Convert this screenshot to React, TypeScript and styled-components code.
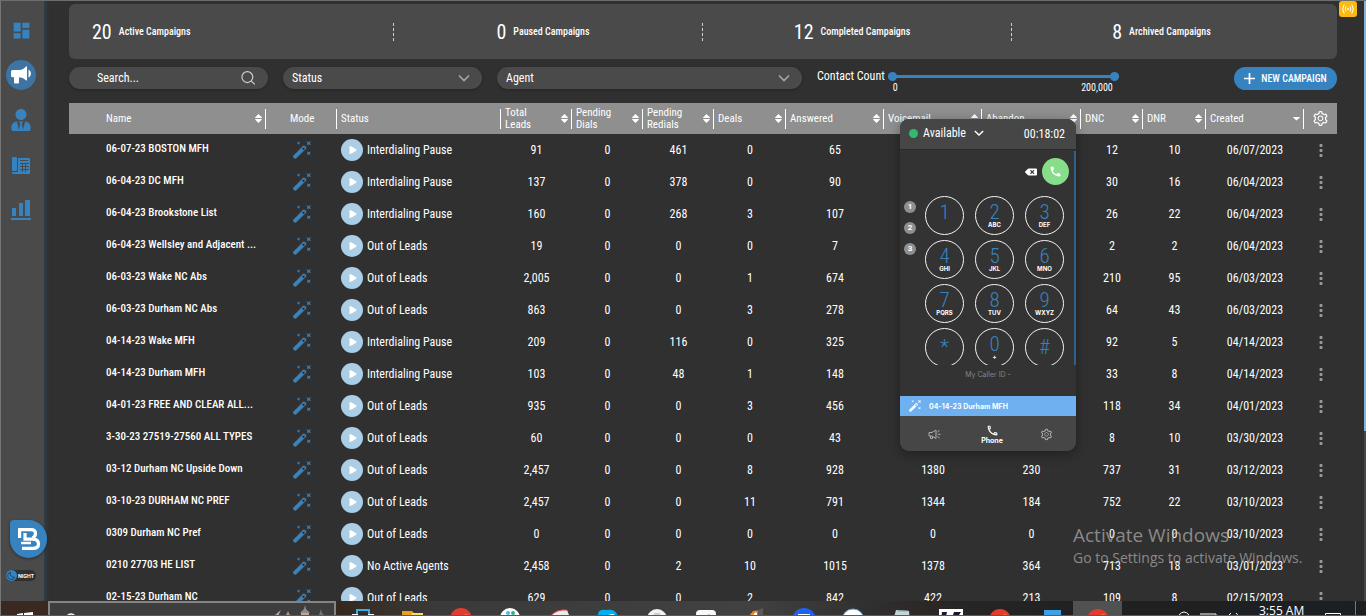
import React from "react";
import styled, { createGlobalStyle } from "styled-components";
import { MdDashboard, MdPhone, MdOutlinePhone } from "react-icons/md";
import { FaUserTie, FaBackspace, FaPlay } from "react-icons/fa";
import { AiOutlineSetting } from "react-icons/ai";

const blue = "#3783c0";

const GlobalStyle = createGlobalStyle`
  * { box-sizing: border-box; }
  body {
    margin: 0;
    background: #303030;
    color: #fff;
    font-family: "Roboto Condensed", Roboto, "Liberation Sans", sans-serif;
    font-size: 12px;
    overflow: hidden;
  }
  button, input, select {
    font: inherit;
    color: inherit;
    background: none;
    border: 0;
    margin: 0;
    padding: 0;
    outline: none;
  }
  svg { display: block; }
`;

const Shell = styled.div`
  position: relative;
  height: 100vh;
  display: flex;
  flex-direction: column;
  overflow: hidden;
`;

const Workspace = styled.div`
  flex: 1;
  min-height: 0;
  display: flex;
  overflow: hidden;
  border-top: 1px solid #6c6e6d;
  border-left: 1px solid #767676;
`;

/* ---------- sidebar ---------- */

const Sidebar = styled.aside`
  width: 43px;
  flex: none;
  display: flex;
  flex-direction: column;
  justify-content: space-between;
  padding: 14px 0 20px;
  background: #4a4a4a;
  box-shadow: 2px 0 4px #304452;
`;

const SideNav = styled.nav`
  display: flex;
  flex-direction: column;
  gap: 15px;
  padding-left: 5px;
`;

const SideLink = styled.a<{ $active?: boolean }>`
  width: 30px;
  height: 30px;
  border-radius: 50%;
  display: flex;
  align-items: center;
  justify-content: center;
  color: ${(p) => (p.$active ? "#fff" : blue)};
  background: ${(p) => (p.$active ? "#3d74a3" : "transparent")};
`;

const SideFoot = styled.div`
  display: flex;
  flex-direction: column;
  gap: 12px;
`;

const Logo = styled.a`
  width: 37px;
  height: 38px;
  margin-left: 9px;
  border-radius: 4px 19px 19px 19px;
  background: ${blue};
  box-shadow: 0 1px 3px rgba(0, 0, 0, 0.4);
  display: flex;
  align-items: center;
  justify-content: center;
`;

const NightToggle = styled.button`
  width: 30px;
  height: 11px;
  margin-left: 5px;
  display: flex;
  align-items: center;
  gap: 1px;
  border-radius: 6px;
  background: #303030;
  font: 700 5px Inter, sans-serif;
`;

/* ---------- main column ---------- */

const Main = styled.main`
  flex: 1;
  min-width: 0;
  padding: 3px 27px 0 25px;
`;

const Stats = styled.section`
  height: 55px;
  padding: 0 16px;
  display: grid;
  grid-template-columns: repeat(4, 1fr);
  align-items: center;
  border-radius: 6px;
  background: #4a4a4a;
`;

const Stat = styled.div`
  height: 18px;
  display: flex;
  align-items: center;
  justify-content: center;
  gap: 7px;
  padding-right: 10px;
  border-right: 1px dashed #cfcfcf;
  font-size: 10px;
  font-weight: 500;
  &:first-child { justify-content: flex-start; padding-left: 7px; }
  &:last-child { border-right: 0; }
`;

const StatNumber = styled.strong`
  font-size: 20px;
  font-weight: 400;
`;

const Filters = styled.form`
  display: grid;
  grid-template-columns: 199fr 199fr 305fr 402fr 103px;
  gap: 15px;
  align-items: center;
  padding: 7px 0 13px;
`;

const Pill = styled.label`
  height: 22px;
  display: flex;
  align-items: center;
  justify-content: space-between;
  padding: 0 12px 0 9px;
  border-radius: 11px;
  background: #4a4a4a;
  box-shadow: 0 1px 3px rgba(0, 0, 0, 0.25);
`;

const SearchInput = styled.input`
  width: 100%;
  padding-left: 19px;
  &::placeholder { color: #fff; opacity: 1; }
`;

const PillSelect = styled.select`
  flex: 1;
  appearance: none;
`;

const CountFilter = styled.div`
  display: flex;
  gap: 3px;
`;

const CountLabel = styled.label`
  line-height: 20px;
`;

const Range = styled.div`
  width: 231px;
  display: grid;
  grid-template-columns: 1fr 1fr;
  grid-template-rows: 20px 4px;
`;

const RangeInput = styled.input<{ $track?: boolean }>`
  grid-area: 1 / 1 / 2 / 3;
  appearance: none;
  width: 100%;
  height: 20px;
  pointer-events: none;
  &::-webkit-slider-runnable-track {
    height: 3px;
    background: ${(p) => (p.$track ? blue : "transparent")};
  }
  &::-webkit-slider-thumb {
    appearance: none;
    pointer-events: auto;
    width: 9px;
    height: 9px;
    margin-top: -3px;
    border-radius: 50%;
    background: ${blue};
  }
`;

const RangeEnd = styled.span<{ $right?: boolean }>`
  padding: 0 6px 0 5px;
  font-size: 10px;
  line-height: 4px;
  text-align: ${(p) => (p.$right ? "right" : "left")};
`;

const NewButton = styled.button`
  height: 23px;
  display: flex;
  align-items: center;
  justify-content: center;
  gap: 6px;
  border-radius: 12px;
  background: ${blue};
  font-size: 10px;
  font-weight: 500;
  white-space: nowrap;
`;

/* ---------- campaign table ---------- */

const Table = styled.table`
  width: 100%;
  table-layout: fixed;
  border-collapse: collapse;
`;

const Th = styled.th`
  height: 31px;
  padding: 0;
  background: #8f8f8f;
  font-size: 11px;
  font-weight: 400;
  text-align: left;
`;

const HeadInner = styled.div<{ $indent: number }>`
  height: 20px;
  display: flex;
  align-items: center;
  justify-content: space-between;
  gap: 10px;
  padding: 0 3px 0 ${(p) => p.$indent}px;
  border-right: 1px solid #fff;
  line-height: 12px;
`;

const HeadLabel = styled.span<{ $wrap: boolean }>`
  max-width: ${(p) => (p.$wrap ? "44px" : "none")};
`;

const Td = styled.td<{ $left?: boolean }>`
  height: 32px;
  padding: 0;
  text-align: ${(p) => (p.$left ? "left" : "center")};
`;

const NameText = styled.div`
  padding: 0 2px 4px 37px;
  overflow: hidden;
  font-size: 11px;
  font-weight: 500;
  white-space: nowrap;
  text-overflow: ellipsis;
`;

const StatusCell = styled.div`
  display: flex;
  align-items: center;
  gap: 4px;
  padding-left: 4px;
`;

const PlayButton = styled.button`
  width: 22px;
  height: 22px;
  padding-left: 1px;
  border-radius: 50%;
  background: #accde6;
  display: flex;
  align-items: center;
  justify-content: center;
`;

const IconButton = styled.button`
  display: flex;
  align-items: center;
  justify-content: center;
  margin: 0 auto;
`;

/* ---------- floating dialer ---------- */

const Dialer = styled.section`
  position: absolute;
  top: 119px;
  right: 290px;
  width: 176px;
  border-radius: 9px;
  overflow: hidden;
  background: #333;
  box-shadow: 0 3px 12px rgba(0, 0, 0, 0.35);
`;

const DialerHead = styled.header`
  height: 31px;
  display: flex;
  align-items: center;
  padding: 0 11px 0 9px;
  background: #464646;
  border-bottom: 1px solid #292929;
`;

const Presence = styled.button`
  display: flex;
  align-items: center;
  gap: 5px;
  padding-bottom: 2px;
  &::before {
    content: "";
    width: 9px;
    height: 9px;
    border-radius: 50%;
    background: #35b870;
  }
  svg { margin-left: 3px; }
`;

const Timer = styled.time`
  margin-left: auto;
`;

const DialerBody = styled.div`
  height: 214px;
  margin-top: 1px;
  overflow: hidden;
  border-right: 2px solid #30618c;
`;

const CallRow = styled.div`
  display: flex;
  justify-content: flex-end;
  align-items: center;
  gap: 5px;
  padding: 7px 5px 11px;
`;

const CallButton = styled.button`
  width: 27px;
  height: 27px;
  border-radius: 50%;
  background: #87dd89;
  display: flex;
  align-items: center;
  justify-content: center;
`;

const PadArea = styled.div`
  display: flex;
  gap: 9px;
  padding-left: 4px;
`;

const Lines = styled.div`
  display: flex;
  flex-direction: column;
  gap: 9px;
  padding-top: 5px;
`;

const LineButton = styled.button`
  width: 12px;
  height: 12px;
  border-radius: 50%;
  background: #8f8f8f;
  font: 700 8px/12px Roboto, sans-serif;
`;

const Keys = styled.div`
  display: grid;
  grid-template-columns: repeat(3, 39px);
  grid-auto-rows: 39px;
  gap: 5px 11px;
`;

const Key = styled.button`
  display: flex;
  flex-direction: column;
  align-items: center;
  justify-content: center;
  border: 1px solid #f4f4f4;
  border-radius: 50%;
  color: ${blue};
  font-size: 21px;
  font-weight: 300;
  line-height: 17px;
`;

const KeyLetters = styled.small`
  height: 7px;
  color: #fff;
  font: 700 6px/7px Inter, sans-serif;
`;

const CallerId = styled.div`
  height: 31px;
  color: #858585;
  font: 400 7px/20px Inter, sans-serif;
  text-align: center;
`;

const Current = styled.div`
  height: 20px;
  display: flex;
  align-items: center;
  gap: 8px;
  padding-left: 9px;
  background: #6eb0f0;
  font: 700 7px Inter, sans-serif;
`;

const Tabs = styled.nav`
  height: 35px;
  display: grid;
  grid-template-columns: 68px 48px 60px;
  background: #464646;
`;

const Tab = styled.button<{ $active?: boolean }>`
  display: flex;
  flex-direction: column;
  align-items: center;
  justify-content: center;
  padding-top: 2px;
  color: ${(p) => (p.$active ? "#fff" : "#adadad")};
  font: 700 7px/8px Inter, sans-serif;
`;

/* ---------- window overlays ---------- */

const CastBadge = styled.button`
  position: absolute;
  top: 1px;
  right: 9px;
  width: 18px;
  height: 16px;
  border-radius: 3px;
  background: #fdb913;
  display: flex;
  align-items: center;
  justify-content: center;
`;

const PageScroll = styled.div`
  flex: none;
  width: 2px;
  background: linear-gradient(#84b4d8 0 430px, #464646 430px);
`;

const Watermark = styled.div`
  position: absolute;
  right: 57px;
  bottom: 48px;
  width: 236px;
  color: rgba(190, 190, 190, 0.65);
  font: 400 14px/20px "Open Sans", sans-serif;
  white-space: nowrap;
  pointer-events: none;
`;

const WatermarkTitle = styled.div`
  font-size: 19px;
  line-height: 25px;
`;

/* ---------- taskbar ---------- */

const Taskbar = styled.footer`
  flex: none;
  height: 15px;
  display: flex;
  overflow: hidden;
  border-left: 1px solid #767676;
  border-bottom: 1px solid #5a5a5a;
  background: linear-gradient(90deg, #3a2921 0, #35291f 25%, #3b3a3a 32%, #414141 55%, #2a2725 68%, #202122 78%, #1c1f22 100%);
`;

const StartButton = styled.button`
  width: 47px;
  display: flex;
  justify-content: center;
`;

const TaskSearch = styled.button`
  width: 288px;
  display: flex;
  justify-content: space-between;
  border: 2px solid #858585;
  border-bottom: 0;
  background: #3e3e3e;
  padding: 1px 3px 0 14px;
`;

const TaskApps = styled.div`
  display: flex;
  padding-left: 2px;
`;

const TaskItem = styled.button<{ $active?: boolean }>`
  width: 49px;
  display: flex;
  justify-content: center;
  background: ${(p) => (p.$active ? "#505252" : "transparent")};
`;

const Tray = styled.div`
  margin-left: auto;
  display: flex;
  gap: 14px;
  padding-right: 9px;
`;

const Clock = styled.time`
  width: 44px;
  padding-top: 1px;
  font: 400 12px/18px "Open Sans", sans-serif;
  white-space: nowrap;
`;

/* ---------- icons ---------- */

const Megaphone = () => (
  <svg width="20" height="18" viewBox="0 0 20 18" fill="currentColor">
    <path d="M0 5.500Q0 4 1.500 4H8Q12 4 15 .5Q16 0 16 1V14Q16 15 15 14.300Q12 11.500 8 11.300V16.500Q8 17.500 7 17.500H4Q3 17.500 3 16.500V11.300H1.500Q0 11.300 0 9.800Z" />
    <path d="M17.500 3.500Q20 5 20 7.500Q20 10 17.500 11.500Z" />
  </svg>
);

const MegaphoneOutline = () => (
  <svg width="13" height="11" viewBox="0 0 13 11" fill="none" stroke="currentColor">
    <path d="M1 3.500H4L8 1V9.500L4 7H1ZM2.500 7V9.500H4.500V7.500" />
    <path d="M9.800 5.300H12.500M9.500 3L11.500 1.500M9.500 7.500L11.500 9" />
  </svg>
);

const DeskPhone = () => (
  <svg width="18" height="17" viewBox="0 0 18 17" fill="currentColor">
    <rect x="0" y="0" width="5" height="14" rx="1" />
    <path d="M0 15H6V1H17Q18 1 18 2V16Q18 17 17 17H1Q0 17 0 16Z" />
    <g fill="#4a4a4a">
      <rect x="8" y="3" width="8" height="1" />
      <rect x="8" y="6" width="9" height="1" />
      <rect x="8" y="9" width="9" height="1" />
      <rect x="8" y="12" width="9" height="1" />
      <rect x="10" y="6" width="1" height="9" />
      <rect x="13" y="6" width="1" height="9" />
      <rect x="5" y="1" width="1" height="14" />
    </g>
  </svg>
);

const Bars = () => (
  <svg width="20" height="20" viewBox="0 0 20 20" fill="currentColor">
    <rect x="1" y="8" width="4" height="8" />
    <rect x="8" y="3" width="4" height="13" />
    <rect x="14" y="0" width="5" height="16" />
    <rect x="0" y="18" width="20" height="2" />
  </svg>
);

const Wand = ({ size = 18, color = blue }: { size?: number; color?: string }) => (
  <svg width={size} height={size} viewBox="0 0 18 18" fill={color}>
    <path d="M0 15L10.200 4.800Q11 4.200 12 5L13 6Q13.700 7 13 7.800L2.800 17.700Q1.800 18 .8 17Q-.3 16 0 15ZM9 7.800L10.500 9.300L12 7.500L10.800 6.200Z" fillRule="evenodd" />
    <path d="M4 .5L5.500 1.200L7 .5L6.300 2L7 3.500L5.500 2.800L4 3.500L4.700 2ZM13.500 0L15.700 1.200L18 0L16.800 2.200L18 4.500L15.700 3.200L13.500 4.500L14.600 2.200ZM14 10.500L15.700 11.200L17.500 10.500L16.800 12.200L17.500 14L15.700 13.300L14 14L14.700 12.200Z" />
  </svg>
);

const SortIcon = ({ single }: { single?: boolean }) => (
  <svg width="7" height="9" viewBox="0 0 7 9" fill="#fff">
    {!single && <path d="M3.500 0L7 3.600Q7 4 6.500 4H.5Q0 4 0 3.600Z" />}
    <path d={single ? "M.5 3H6.500L7 3.500L3.500 6.500L0 3.500Z" : "M3.500 9L7 5.400Q7 5 6.500 5H.5Q0 5 0 5.400Z"} />
  </svg>
);

const Chevron = ({ w = 12, color = "#a5a5a5" }: { w?: number; color?: string }) => (
  <svg width={w} height="8" viewBox="0 0 12 8" fill="none" stroke={color} strokeWidth="1.700">
    <path d="M1 1.500L6 6.500L11 1.500" />
  </svg>
);

const SearchIcon = () => (
  <svg width="16" height="16" viewBox="0 0 16 16" fill="none" stroke="#cfcfcf" strokeWidth="1.300">
    <circle cx="7" cy="7" r="6" />
    <path d="M11.200 11.200L15.200 15" />
  </svg>
);

const Dots = () => (
  <svg width="4" height="13" viewBox="0 0 4 13" fill="#9a9a9a">
    <rect x=".5" y="0" width="3" height="3" rx="1" />
    <rect x=".5" y="5" width="3" height="3" rx="1" />
    <rect x=".5" y="10" width="3" height="3" rx="1" />
  </svg>
);

const LogoMark = () => (
  <svg width="24" height="24" viewBox="0 0 24 24" fill="none" stroke="#fff" strokeWidth="3.200">
    <path d="M2.600 11V2.600H14Q18.500 2.600 18.500 6.500Q18.500 9.500 15.500 11" />
    <path d="M8 6V12.200H16Q21.500 12.600 21.500 17Q21.500 21.400 16 21.400H5" />
    <path d="M4 16H14" strokeWidth="2.500" />
  </svg>
);

const Moon = () => (
  <svg width="11" height="11" viewBox="0 0 11 11">
    <circle cx="5.500" cy="5.500" r="5.500" fill={blue} />
    <path d="M4.500 2.200A3.700 3.700 0 1 0 8.800 7.200A3.700 3.700 0 0 1 4.500 2.200Z" fill="none" stroke="#1d486d" />
  </svg>
);

const Cast = () => (
  <svg width="12" height="10" viewBox="0 0 12 10" fill="none" stroke="#fff">
    <circle cx="6" cy="5" r="1" fill="#fff" stroke="none" />
    <path d="M4 2.500Q2.500 5 4 7.500M8 2.500Q9.500 5 8 7.500M2.200 .5Q-.8 5 2.200 9.500M9.800 .5Q12.800 5 9.800 9.500" />
  </svg>
);

const Castle = () => (
  <svg width="62" height="14" viewBox="0 0 62 14">
    <path d="M6 11L12 6L10 10L9 14H4Z" fill="#b9aca8" />
    <path d="M19 7L21 11V14H17V11Z" fill="#b48f86" />
    <path d="M36 1L37 5L41 9H31L35 5Z" fill="#8d8b90" />
    <path d="M32 9H40V14H32Z" fill="#d9a171" />
    <path d="M52 5L53 9L55 11V14H50V11Z" fill="#77726f" />
  </svg>
);

const taskIcons: React.ReactNode[] = [
  <><path d="M6 8V3H18V8" fill="none" stroke="#2bb1ee" strokeWidth="2" /><path d="M1 7H23V14H1Z" fill="#fff" /><path d="M7 7H17V9H7Z" fill="#272727" /></>,
  <><path d="M2 4H12L14 6H23V14H2Z" fill="#e1a41a" /><path d="M12 6H23V14H9Z" fill="#ffd874" /></>,
  <><circle cx="12" cy="12" r="11" fill="#e33b2e" /><path d="M8 14Q12 6 20 8L22 14Z" fill="#ffbd3c" /></>,
  <><circle cx="12" cy="11" r="10" fill="#fff" /><circle cx="10" cy="6" r="2" fill="#36c5f0" /><circle cx="15" cy="6" r="2" fill="#2eb67d" /></>,
  <><path d="M2 12Q8 1 20 3L22 8L20 14H2Z" fill="#eeeaea" /><path d="M3 9Q10 2 20 3" fill="none" stroke="#d3343c" strokeWidth="1" /></>,
  <><path d="M2 7Q3 2 10 3Q20 1 22 10V14H2Z" fill="#00aff0" /><path d="M10 12Q11 8 18 8" stroke="#fff" strokeWidth="2" fill="none" /></>,
  <><circle cx="12" cy="12" r="10" fill="#f2f2f2" /><path d="M9 7H15" stroke="#aaa" /></>,
  <><rect x="2" y="3" width="20" height="20" rx="4" fill="#f8f8f8" /><path d="M15 7V14" stroke="#7aab8f" strokeWidth="1" /></>,
  <><path d="M5 10L10 4L19 3V14H5Z" fill="#ee8425" /><path d="M8 10L13 5L17 10Z" fill="#fff" /><path d="M15 3L20 1V9H14Z" fill="#5a5a5a" /></>,
  <><circle cx="12" cy="13" r="12" fill="#1f62f0" /><path d="M6 7H18V14H6Z" fill="#fff" /></>,
  <><circle cx="12" cy="13" r="11" fill="#fff" stroke="#4fa5d9" /></>,
  <><path d="M6 3L19 4L20 14H3Z" fill="#c4d6da" /><path d="M7 4H18" stroke="#87a6ad" /></>,
  <><path d="M0 2H24V14H0Z" fill="#fff" /><path d="M3 5H8L6 14H2ZM15 5H22L16 14H12Z" fill="#181830" /></>,
  <><circle cx="12" cy="13" r="11" fill="#e33b2e" /><path d="M8 14Q12 6 20 8L22 14Z" fill="#ffbd3c" /></>,
  <><path d="M7 3H24V14H7Z" fill="#3fa0ea" /><path d="M1 8H12V14H1Z" fill="#1464b4" /></>,
  <><circle cx="12" cy="13" r="11" fill="#e33b2e" /><path d="M8 14Q12 6 20 8L22 14Z" fill="#ffbd3c" /></>,
];

/* ---------- data ---------- */

const columns: { label: string; width?: number; sort?: boolean }[] = [
  { label: "Name", sort: true },
  { label: "Mode", width: 71 },
  { label: "Status", width: 164 },
  { label: "Total Leads", width: 71, sort: true },
  { label: "Pending Dials", width: 71, sort: true },
  { label: "Pending Redials", width: 71, sort: true },
  { label: "Deals", width: 72, sort: true },
  { label: "Answered", width: 98, sort: true },
  { label: "Voicemail", width: 98, sort: true },
  { label: "Abandon", width: 99, sort: true },
  { label: "DNC", width: 62, sort: true },
  { label: "DNR", width: 63, sort: true },
  { label: "Created", width: 98, sort: true },
];

const P = "Interdialing Pause";
const O = "Out of Leads";

const rows: string[][] = [
  ["06-07-23 BOSTON MFH", P, "91", "0", "461", "0", "65", "", "", "12", "10", "06/07/2023"],
  ["06-04-23 DC MFH", P, "137", "0", "378", "0", "90", "", "", "30", "16", "06/04/2023"],
  ["06-04-23 Brookstone List", P, "160", "0", "268", "3", "107", "", "", "26", "22", "06/04/2023"],
  ["06-04-23 Wellsley and Adjacent ...", O, "19", "0", "0", "0", "7", "", "", "2", "2", "06/04/2023"],
  ["06-03-23 Wake NC Abs", O, "2,005", "0", "0", "1", "674", "", "", "210", "95", "06/03/2023"],
  ["06-03-23 Durham NC Abs", O, "863", "0", "0", "3", "278", "", "", "64", "43", "06/03/2023"],
  ["04-14-23 Wake MFH", P, "209", "0", "116", "0", "325", "", "", "92", "5", "04/14/2023"],
  ["04-14-23 Durham MFH", P, "103", "0", "48", "1", "148", "", "", "33", "8", "04/14/2023"],
  ["04-01-23 FREE AND CLEAR ALL...", O, "935", "0", "0", "3", "456", "", "", "118", "34", "04/01/2023"],
  ["3-30-23 27519-27560 ALL TYPES", O, "60", "0", "0", "0", "43", "", "", "8", "10", "03/30/2023"],
  ["03-12 Durham NC Upside Down", O, "2,457", "0", "0", "8", "928", "1380", "230", "737", "31", "03/12/2023"],
  ["03-10-23 DURHAM NC PREF", O, "2,457", "0", "0", "11", "791", "1344", "184", "752", "22", "03/10/2023"],
  ["0309 Durham NC Pref", O, "0", "0", "0", "0", "0", "0", "0", "0", "0", "03/10/2023"],
  ["0210 27703 HE LIST", "No Active Agents", "2,458", "0", "2", "10", "1015", "1378", "364", "713", "18", "03/01/2023"],
  ["02-15-23 Durham NC", O, "629", "0", "0", "2", "842", "422", "213", "109", "8", "02/15/2023"],
];

const stats = [
  ["20", "Active Campaigns"],
  ["0", "Paused Campaigns"],
  ["12", "Completed Campaigns"],
  ["8", "Archived Campaigns"],
];

const keys = [
  ["1", " "], ["2", "ABC"], ["3", "DEF"],
  ["4", "GHI"], ["5", "JKL"], ["6", "MNO"],
  ["7", "PQRS"], ["8", "TUV"], ["9", "WXYZ"],
  ["*", ""], ["0", "+"], ["#", ""],
];

export default function App() {
  return (
    <Shell>
      <GlobalStyle />
      <Workspace>
        <Sidebar>
          <SideNav>
            <SideLink href="#" aria-label="Dashboard"><MdDashboard size={21} /></SideLink>
            <SideLink href="#" $active aria-label="Campaigns"><Megaphone /></SideLink>
            <SideLink href="#" aria-label="Agents"><FaUserTie size={22} /></SideLink>
            <SideLink href="#" aria-label="Phones"><DeskPhone /></SideLink>
            <SideLink href="#" aria-label="Reports"><Bars /></SideLink>
          </SideNav>
          <SideFoot>
            <Logo href="#" aria-label="Home"><LogoMark /></Logo>
            <NightToggle type="button"><Moon />NIGHT</NightToggle>
          </SideFoot>
        </Sidebar>

        <Main>
          <Stats>
            {stats.map(([n, label]) => (
              <Stat key={label}><StatNumber>{n}</StatNumber>{label}</Stat>
            ))}
          </Stats>

          <Filters>
            <Pill>
              <SearchInput placeholder="Search..." aria-label="Search" />
              <SearchIcon />
            </Pill>
            <Pill>
              <PillSelect aria-label="Status"><option>Status</option></PillSelect>
              <Chevron />
            </Pill>
            <Pill>
              <PillSelect aria-label="Agent"><option>Agent</option></PillSelect>
              <Chevron />
            </Pill>
            <CountFilter>
              <CountLabel htmlFor="count-min">Contact Count</CountLabel>
              <Range>
                <RangeInput $track id="count-min" type="range" min={0} max={200000} defaultValue={0} />
                <RangeInput type="range" aria-label="Maximum contact count" min={0} max={200000} defaultValue={200000} />
                <RangeEnd>0</RangeEnd>
                <RangeEnd $right>200,000</RangeEnd>
              </Range>
            </CountFilter>
            <NewButton type="button">
              <svg width="11" height="11" viewBox="0 0 11 11" stroke="#fff" strokeWidth="1.700"><path d="M5.500 0V11M0 5.500H11" /></svg>
              NEW CAMPAIGN
            </NewButton>
          </Filters>

          <Table>
            <colgroup>
              {columns.map((c) => <col key={c.label} width={c.width} />)}
              <col width={33} />
            </colgroup>
            <thead>
              <tr>
                {columns.map((c, i) => (
                  <Th key={c.label} scope="col">
                    <HeadInner $indent={i === 0 ? 37 : i === 1 ? 24 : 4}>
                      <HeadLabel $wrap={c.label.includes(" ")}>{c.label}</HeadLabel>
                      {c.sort && (
                        <button type="button" aria-label={`Sort by ${c.label}`}>
                          <SortIcon single={c.label === "Created"} />
                        </button>
                      )}
                    </HeadInner>
                  </Th>
                ))}
                <Th scope="col">
                  <IconButton type="button" aria-label="Table settings"><AiOutlineSetting size={17} /></IconButton>
                </Th>
              </tr>
            </thead>
            <tbody>
              {rows.map(([name, status, ...values]) => (
                <tr key={name}>
                  <Td $left><NameText>{name}</NameText></Td>
                  <Td><IconButton type="button" aria-label="Mode"><Wand /></IconButton></Td>
                  <Td $left>
                    <StatusCell>
                      <PlayButton type="button" aria-label="Start"><FaPlay size={8} /></PlayButton>
                      {status}
                    </StatusCell>
                  </Td>
                  {values.map((v, i) => <Td key={i}>{v}</Td>)}
                  <Td><IconButton type="button" aria-label="More"><Dots /></IconButton></Td>
                </tr>
              ))}
            </tbody>
          </Table>
        </Main>
        <PageScroll />
      </Workspace>

      <Taskbar>
        <StartButton aria-label="Start">
          <svg width="16" height="14" viewBox="0 0 16 14" fill="#fff"><path d="M0 13L6 12V14H0ZM7 12L16 11V14H7Z" /></svg>
        </StartButton>
        <TaskSearch aria-label="Search Windows">
          <svg width="14" height="13" viewBox="0 0 14 13" fill="none" stroke="#fff" strokeWidth="1.500"><circle cx="7" cy="15" r="5" /></svg>
          <Castle />
        </TaskSearch>
        <TaskApps>
          {taskIcons.map((icon, i) => (
            <TaskItem key={i} $active={i === 15} aria-label={`App ${i + 1}`}>
              <svg width="24" height="14" viewBox="0 -5 24 14"><g transform="translate(0 1)">{icon}</g></svg>
            </TaskItem>
          ))}
        </TaskApps>
        <Tray>
          <svg width="76" height="14" viewBox="0 0 76 14" fill="none" stroke="#fff">
            <path d="M10 14Q15 8 20 14M31 13H47V14M60 14L62 12M67 12Q69 14 69 15" />
          </svg>
          <Clock>3:55 AM</Clock>
          <svg width="40" height="14" viewBox="0 0 40 14" fill="none" stroke="#fff">
            <path d="M8.500 14V12.500H23.500V14" />
            <path d="M38.500 0V14" stroke="#777" />
          </svg>
        </Tray>
      </Taskbar>

      <CastBadge aria-label="Broadcast"><Cast /></CastBadge>

      <Dialer>
        <DialerHead>
          <Presence type="button">Available<Chevron w={10} color="#fff" /></Presence>
          <Timer>00:18:02</Timer>
        </DialerHead>
        <DialerBody>
          <CallRow>
            <button type="button" aria-label="Delete digit"><FaBackspace size={12} /></button>
            <CallButton type="button" aria-label="Call"><MdPhone size={13} /></CallButton>
          </CallRow>
          <PadArea>
            <Lines>
              {["1", "2", "3"].map((n) => <LineButton key={n} type="button">{n}</LineButton>)}
            </Lines>
            <Keys>
              {keys.map(([digit, letters]) => (
                <Key key={digit} type="button">
                  {digit}
                  {letters && <KeyLetters>{letters}</KeyLetters>}
                </Key>
              ))}
            </Keys>
          </PadArea>
        </DialerBody>
        <CallerId>My Caller ID -</CallerId>
        <Current><Wand size={12} color="#fff" />04-14-23 Durham MFH</Current>
        <Tabs>
          <Tab type="button" aria-label="Campaign"><MegaphoneOutline /></Tab>
          <Tab type="button" $active><MdOutlinePhone size={13} />Phone</Tab>
          <Tab type="button" aria-label="Settings"><AiOutlineSetting size={13} /></Tab>
        </Tabs>
      </Dialer>

      <Watermark>
        <WatermarkTitle>Activate Windows</WatermarkTitle>
        Go to Settings to activate Windows.
      </Watermark>
    </Shell>
  );
}
